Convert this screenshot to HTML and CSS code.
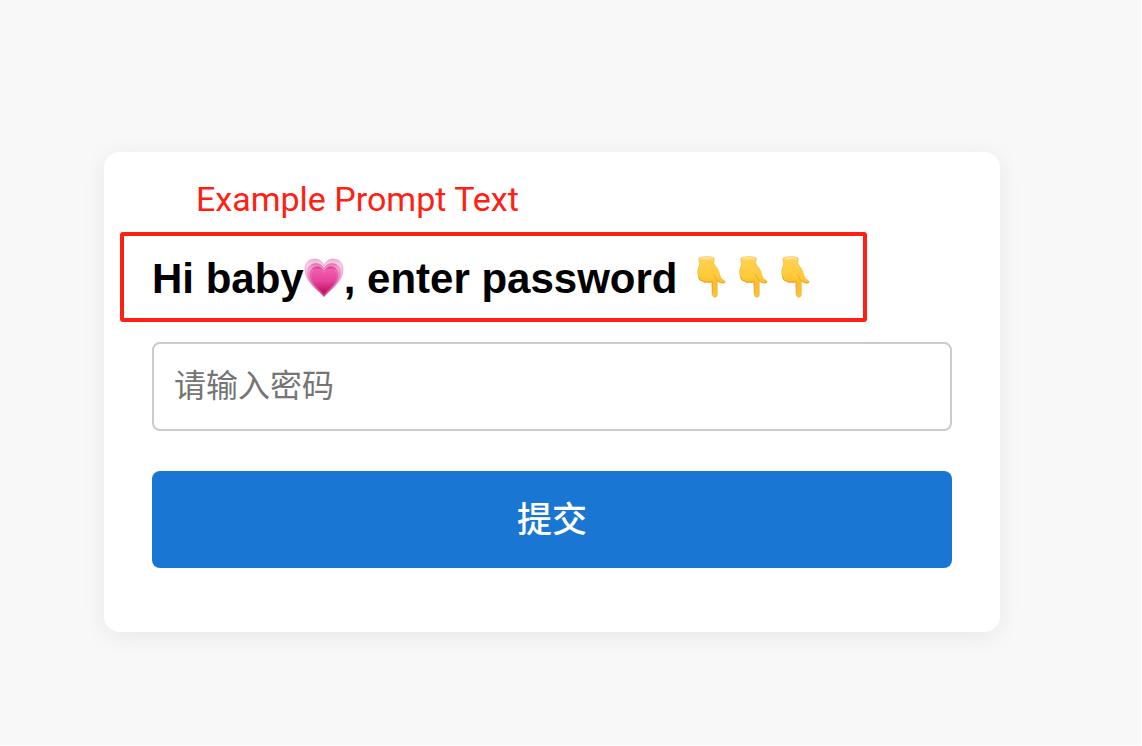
FILE: index.html
```html
<!DOCTYPE html>
<html lang="zh-CN">
<head>
<meta charset="utf-8">
<meta name="viewport" content="width=device-width, initial-scale=1">
<title>Password</title>
<link rel="stylesheet" href="styles.css">
</head>
<body>
<svg class="defs" width="0" height="0" aria-hidden="true">
  <defs>
    <linearGradient id="outer" x1="0" y1="0" x2="0" y2="1"><stop offset="0" stop-color="#efb0d2"/><stop offset="0.15" stop-color="#f7d0e5"/><stop offset="0.6" stop-color="#f0a5cd"/><stop offset="1" stop-color="#d43a83"/></linearGradient>
    <linearGradient id="middle" x1="0" y1="0" x2="0" y2="1"><stop offset="0" stop-color="#e572b2"/><stop offset="0.15" stop-color="#f3a5d0"/><stop offset="0.6" stop-color="#eb7bb9"/><stop offset="1" stop-color="#c91e6c"/></linearGradient>
    <linearGradient id="inner" x1="0" y1="0" x2="0" y2="1"><stop offset="0" stop-color="#dc3793"/><stop offset="0.15" stop-color="#f070b8"/><stop offset="0.6" stop-color="#e64ba2"/><stop offset="1" stop-color="#c21562"/></linearGradient>
    <linearGradient id="core" x1="0" y1="0" x2="0" y2="1"><stop offset="0" stop-color="#f55cb0"/><stop offset="0.5" stop-color="#e5429b"/><stop offset="1" stop-color="#b90b55"/></linearGradient>
    <linearGradient id="skin" x1="0" y1="0" x2="0" y2="1"><stop offset="0" stop-color="#ffdc72"/><stop offset="0.12" stop-color="#ffd04c"/><stop offset="0.5" stop-color="#ffca38"/><stop offset="0.64" stop-color="#fbbd2b"/><stop offset="1" stop-color="#fdc434"/></linearGradient>
    <path id="heart-shape" d="M20 39C16 33 1 25 1 11.500C1 5 5 1 10.500 1C15 1 18.500 3.500 20 7.500C21.500 3.500 25 1 29.500 1C35 1 39 5 39 11.500C39 25 24 33 20 39Z"/>
    <symbol id="heart" viewBox="0 0 40 40">
      <use href="#heart-shape" fill="url(#outer)" stroke="#e58fbe" stroke-width=".6"/>
      <use href="#heart-shape" fill="url(#middle)" stroke="#d95fa3" stroke-width=".6" transform="translate(3 4.700) scale(.85)"/>
      <use href="#heart-shape" fill="url(#inner)" stroke="#d33a8e" stroke-width=".6" transform="translate(5.400 8) scale(.73)"/>
      <use href="#heart-shape" fill="url(#core)" transform="translate(7 10.500) scale(.65)"/>
    </symbol>
    <symbol id="hand" viewBox="0 0 42 42">
      <path d="M10 2.200C13 .2 22 .2 25 2C25.800 2.800 25 4 24.800 5.500C24.400 8.200 26 9.500 28 12C30.500 15.500 30.300 19 32.200 22.200C33.300 23.700 36.500 24.600 36.200 26C35.600 28.100 31.400 26.900 28.300 24.800L28.300 38.600C28.300 42 23.300 42 23.200 38.600L22.800 25.800C21.500 27 19.500 27 18.200 26.200C16.800 26.900 14.500 26.600 13.600 25.200C10.800 25 9.300 22.500 9.300 20C8.600 17 8.500 13.500 9.600 11.200C11 8.300 10.800 6.500 9.800 4.200C9.500 3.300 9.400 2.800 10 2.200Z" fill="url(#skin)" stroke="#e9a92e" stroke-width=".5"/>
      <path d="M9.800 20.500C10.300 24 12 25.200 13.800 24.800C15 26.100 16.800 26.200 18.200 25.700C20 26.500 22 26.200 23 25" fill="none" stroke="#e0901c" stroke-width=".9" opacity=".7"/>
      <path d="M23.200 25L23.600 38" fill="none" stroke="#e9a228" stroke-width=".7"/>
      <path d="M28.300 25C30.500 26.700 34 27.700 35.800 26.200M24.500 18.500C26 21 27 23.500 28.300 24.800" fill="none" stroke="#df9222" stroke-width=".8" opacity=".75"/>
      <path d="M10.500 2.200C13.500 .9 21.500 .9 24.500 2.200C21.500 3.200 13.500 3.200 10.500 2.200Z" fill="#ffe59a"/>
    </symbol>
  </defs>
</svg>
<main class="card">
  <p class="note">Example Prompt Text</p>
  <h1 class="prompt">Hi baby<svg class="heart" role="img" aria-label="💗"><use href="#heart"/></svg>, enter password <svg class="hand" role="img" aria-label="👇"><use href="#hand"/></svg><svg class="hand" role="img" aria-label="👇"><use href="#hand"/></svg><svg class="hand" role="img" aria-label="👇"><use href="#hand"/></svg></h1>
  <form class="form">
    <input class="field" type="password" aria-label="请输入密码" placeholder="请输入密码">
    <button class="submit" type="submit">提交</button>
  </form>
</main>
</body>
</html>
```

FILE: styles.css
```css
* {
  box-sizing: border-box;
}

body {
  margin: 0;
  min-height: 100vh;
  padding: 152px 141px 112px 104px;
  border: solid #fff;
  border-width: 0 1px 1px 0;
  background: #f8f8f8;
  font-family: "Liberation Sans", "Noto Sans CJK SC", sans-serif;
}

.defs {
  position: absolute;
}

.card {
  padding: 24px 48px 64px;
  border-radius: 16px;
  background: #fff;
  box-shadow: 0 4px 24px rgba(0, 0, 0, 0.07);
}

.note {
  margin: 0 0 10px 44px;
  color: #ff2013;
  font: 34px/46px Roboto, sans-serif;
}

.prompt {
  width: fit-content;
  margin: 0 0 20px -32px;
  padding: 4px 48px 0 28px;
  border: 4px solid #ff2013;
  border-radius: 3px;
  color: #000;
  font-size: 42px;
  line-height: 78px;
}

.heart {
  width: 40px;
  height: 40px;
  vertical-align: -5px;
}

.hand {
  width: 42px;
  height: 42px;
  vertical-align: -5px;
}

.form {
  display: grid;
  gap: 40px;
}

.field {
  width: 100%;
  padding: 20px;
  border: 2px solid #ccc;
  border-radius: 8px;
  background: #fff;
  color: #000;
  font: 32px/45px "Liberation Sans", "Noto Sans CJK SC", sans-serif;
}

.field::placeholder {
  color: #757575;
  opacity: 1;
}

.submit {
  padding: 24px;
  border: 0;
  border-radius: 8px;
  background: #1976d2;
  color: #fff;
  font: 500 35px/49px "Liberation Sans", "Noto Sans CJK SC", sans-serif;
}
```
